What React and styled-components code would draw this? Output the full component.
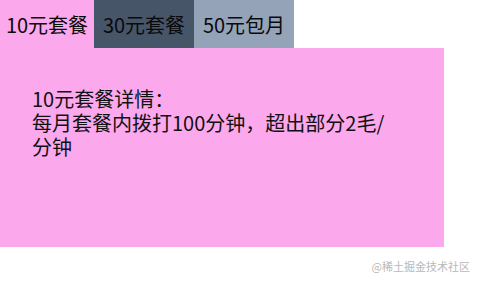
import React, { useState } from "react";
import styled, { createGlobalStyle } from "styled-components";

const GlobalStyle = createGlobalStyle`
  html, body {
    margin: 0;
    padding: 0;
    background: #ffffff;
  }
  body {
    font-family: "Microsoft YaHei", "Noto Sans CJK SC", "Noto Sans", sans-serif;
    color: #111111;
  }
`;

const Page = styled.div`
  position: relative;
  width: 480px;
  height: 282px;
  overflow: hidden;
`;

const TabBar = styled.div`
  display: flex;
  height: 48px;
`;

const Tab = styled.div`
  width: ${(p) => p.w}px;
  display: flex;
  align-items: center;
  justify-content: center;
  font-size: 20px;
  white-space: nowrap;
  color: #0a0a0a;
  background: ${(p) => p.bg};
  cursor: pointer;
`;

const Panel = styled.div`
  box-sizing: border-box;
  width: 444px;
  height: 199px;
  padding: 39px 0 0 32px;
  background: #fba8ec;
`;

const Detail = styled.div`
  width: 360px;
  font-size: 20px;
  line-height: 24px;
  color: #111111;
`;

const Line = styled.div``;

const Watermark = styled.div`
  position: absolute;
  right: 10px;
  bottom: 8px;
  font-size: 11px;
  color: #b8b8b8;
`;

const plans = [
  { id: 1, title: "10元套餐", detail: "每月套餐内拨打100分钟，超出部分2毛/分钟" },
  { id: 2, title: "30元套餐", detail: "每月套餐内拨打300分钟，超出部分1.5毛/分钟" },
  { id: 3, title: "50元包月", detail: "每月无限量随心打" },
];

const colors = ["#fba8ec", "#475569", "#94a3b8"];
const widths = [94, 100, 100];

const App = () => {
  const [active, setActive] = useState(0);
  const plan = plans[active];

  return (
    <Page>
      <GlobalStyle />
      <TabBar>
        {plans.map((p, i) => (
          <Tab
            key={p.id}
            w={widths[i]}
            bg={i === active ? colors[0] : colors[i === 0 ? 1 : i]}
            onClick={() => setActive(i)}
          >
            {p.title}
          </Tab>
        ))}
      </TabBar>
      <Panel>
        <Detail>
          <Line>{plan.title}详情：</Line>
          <Line>{plan.detail}</Line>
        </Detail>
      </Panel>
      <Watermark>@稀土掘金技术社区</Watermark>
    </Page>
  );
};

export default App;
